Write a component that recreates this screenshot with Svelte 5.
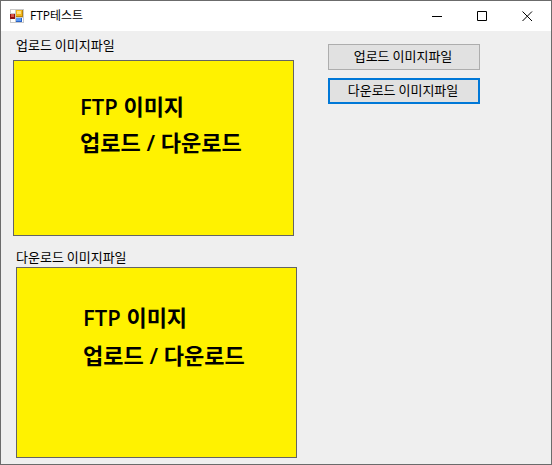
<script>
let previews = [
     { id: 'upload', label: '업로드 이미지파일' },
     { id: 'download', label: '다운로드 이미지파일' }
];

let active = $state('download');
</script>

<div class="window">
     <header>
          <svg class="appicon" viewBox="0 0 14 14" width="14" height="14" aria-hidden="true">
               <rect x="0" y="0" width="14" height="14" fill="#c9c9c9" />
               <rect x="1" y="1" width="4" height="3" fill="#fff" />
               <rect x="1" y="10" width="4" height="3" fill="#fff" />
               <rect x="0" y="5" width="5" height="5" fill="#8e1111" />
               <rect x="1" y="5" width="3" height="3" fill="#d9534a" />
               <rect x="6" y="1" width="7" height="7" fill="#b98309" />
               <rect x="6" y="1" width="6" height="6" fill="#f2b61c" />
               <rect x="7" y="2" width="4" height="3" fill="#ffe07c" />
               <rect x="6" y="9" width="6" height="4" fill="#2a62c4" />
               <rect x="6" y="9" width="5" height="3" fill="#5b9af5" />
               <rect x="12" y="9" width="1" height="4" fill="#fff" />
          </svg>
          <h1>FTP테스트</h1>
          <div class="controls">
               <button type="button" aria-label="최소화">
                    <svg viewBox="0 0 11 11" width="11" height="11"><path d="M0 5.5H10" /></svg>
               </button>
               <button type="button" aria-label="최대화">
                    <svg viewBox="0 0 11 11" width="11" height="11"><path d="M0.5 0.5H9.5V9.5H0.5Z" /></svg>
               </button>
               <button type="button" aria-label="닫기">
                    <svg viewBox="0 0 11 11" width="11" height="11"><path d="M0.5 0.5L10 10M10 0.5L0.5 10" /></svg>
               </button>
          </div>
     </header>

     <main>
          <div class="previews">
               {#each previews as item (item.id)}
                    <figure class={item.id}>
                         <figcaption>{item.label}</figcaption>
                         <div class="picture">
                              <p>FTP 이미지</p>
                              <p>업로드 / 다운로드</p>
                         </div>
                    </figure>
               {/each}
          </div>
          <div class="actions">
               {#each previews as item (item.id)}
                    <button type="button" class:active={active == item.id} onclick={() => active = item.id}>{item.label}</button>
               {/each}
          </div>
     </main>
</div>

<style>
     .window {
          box-sizing: border-box;
          min-height: 100vh;
          border: 1px solid #6b6b6b;
          background: #efefef;
          color: #000;
          font-family: "Noto Sans CJK KR", sans-serif;
          font-size: 13px;
          font-weight: 400;
          line-height: 18px;
     }
     header {
          display: flex;
          align-items: center;
          height: 30px;
          padding: 0 1px 0 9px;
          background: #fff;
     }
     h1 {
          flex: 1;
          margin: 0 0 0 6px;
          font-family: "Open Sans", "Noto Sans CJK KR", sans-serif;
          font-size: 12px;
          font-weight: 400;
     }
     .controls {
          display: flex;
          height: 100%;
     }
     .controls button {
          display: flex;
          align-items: center;
          justify-content: center;
          width: 45px;
          padding: 0;
          border: 0;
          background: none;
     }
     .controls path {
          fill: none;
          stroke: #000;
     }
     main {
          display: grid;
          grid-template-columns: 284fr 223fr;
          column-gap: 31px;
          padding: 5px 0 6px 12px;
     }
     figure {
          margin: 0;
     }
     figcaption {
          padding-left: 3px;
     }
     .picture {
          box-sizing: border-box;
          padding-left: 66px;
          border: 1px solid #646464;
          background: #fff200;
          font-family: "Open Sans", "Noto Sans CJK KR", sans-serif;
          font-size: 22px;
          font-weight: 600;
          white-space: nowrap;
     }
     .picture p {
          margin: 0;
     }
     .upload .picture {
          height: 176px;
          margin: 6px 3px 12px 0;
          padding-top: 27px;
          line-height: 36px;
     }
     .download .picture {
          height: 191px;
          margin: 1px 0 0 3px;
          padding-top: 30px;
          line-height: 38px;
     }
     .actions {
          display: flex;
          flex-direction: column;
          gap: 8px;
          padding-top: 8px;
     }
     .actions button {
          box-sizing: border-box;
          width: 100%;
          max-width: 152px;
          height: 26px;
          padding: 0 2px 2px 0;
          border: 1px solid #adadad;
          background: #e1e1e1;
          color: #000;
          font: inherit;
     }
     .actions button.active {
          border: 2px solid #0078d7;
     }
</style>
